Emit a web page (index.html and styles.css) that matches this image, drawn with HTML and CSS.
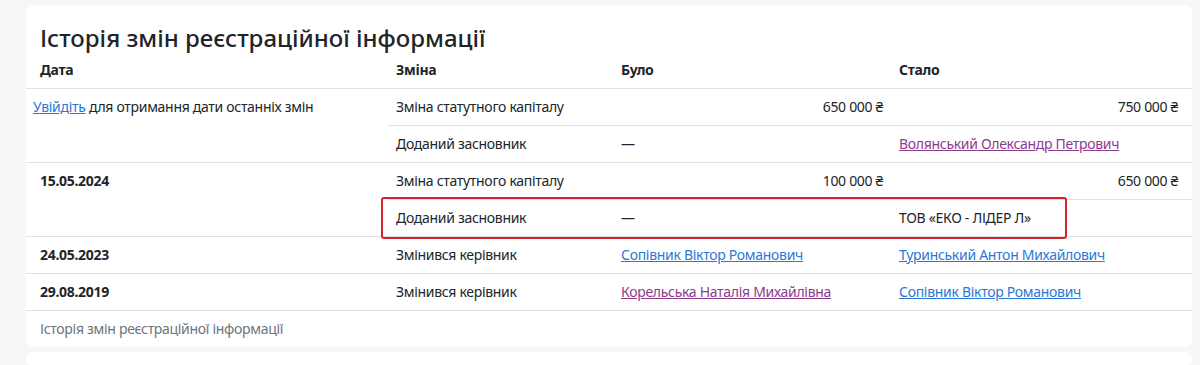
FILE: index.html
```html
<!DOCTYPE html>
<html lang="uk">
<head>
<meta charset="utf-8">
<title>Історія змін реєстраційної інформації</title>
<link rel="stylesheet" href="styles.css">
</head>
<body>
<main class="page">
  <section class="card">
    <h2 class="card-title">Історія змін реєстраційної інформації</h2>
    <div class="table-wrap">
      <table class="history">
        <caption>Історія змін реєстраційної інформації</caption>
        <colgroup>
          <col class="c-date"><col class="c-change"><col class="c-was"><col class="c-now">
        </colgroup>
        <thead>
          <tr><th class="date">Дата</th><th>Зміна</th><th>Було</th><th class="last">Стало</th></tr>
        </thead>
        <tbody>
          <tr>
            <td rowspan="2" class="login"><a href="#" class="link">Увійдіть</a> для отримання дати останніх змін</td>
            <td>Зміна статутного капіталу</td>
            <td class="num">650 000 ₴</td>
            <td class="num last">750 000 ₴</td>
          </tr>
          <tr>
            <td>Доданий засновник</td>
            <td>—</td>
            <td class="last"><a href="#" class="link visited">Волянський Олександр Петрович</a></td>
          </tr>
          <tr>
            <td rowspan="2" class="date">15.05.2024</td>
            <td>Зміна статутного капіталу</td>
            <td class="num">100 000 ₴</td>
            <td class="num last">650 000 ₴</td>
          </tr>
          <tr class="marked">
            <td>Доданий засновник</td>
            <td>—</td>
            <td class="last">ТОВ «ЕКО - ЛІДЕР Л»</td>
          </tr>
          <tr>
            <td class="date">24.05.2023</td>
            <td>Змінився керівник</td>
            <td><a href="#" class="link">Сопівник Віктор Романович</a></td>
            <td class="last"><a href="#" class="link">Туринський Антон Михайлович</a></td>
          </tr>
          <tr>
            <td class="date">29.08.2019</td>
            <td>Змінився керівник</td>
            <td><a href="#" class="link visited">Корельська Наталія Михайлівна</a></td>
            <td class="last"><a href="#" class="link">Сопівник Віктор Романович</a></td>
          </tr>
        </tbody>
      </table>
      <div class="highlight" aria-hidden="true"></div>
    </div>
  </section>
  <section class="card next"></section>
</main>
</body>
</html>
```
FILE: styles.css
```css
* { box-sizing: border-box; }
html, body { margin: 0; padding: 0; }
body {
  background: #f6f7f9;
  font-family: "Noto Sans", "Open Sans", sans-serif;
  color: #212529;
  font-size: 14px;
  line-height: 20px;
  letter-spacing: -0.3px;
  overflow: hidden;
}
.page {
  padding: 6px 8px 0 26px;
  display: flex;
  flex-direction: column;
  gap: 6px;
}
.card {
  background: #fff;
  border-radius: 6px;
  padding-top: 17px;
}
.card.next { height: 13px; padding: 0; }
.card-title {
  margin: 0 0 0 14px;
  font-size: 24px;
  line-height: 29px;
  font-weight: 500;
  letter-spacing: 0;
}
.table-wrap { position: relative; }
.history {
  width: 100%;
  border-collapse: collapse;
  caption-side: bottom;
  table-layout: fixed;
}
.c-date { width: 362px; }
.c-change { width: 225px; }
.c-was { width: 278px; }
.history caption {
  text-align: left;
  color: #6c757d;
  padding: 8px 14px 7px 14px;
}
.history th, .history td {
  padding: 8px;
  text-align: left;
  vertical-align: top;
  border-bottom: 1px solid #dee2e6;
  white-space: nowrap;
}
.history th { font-weight: 700; }
.history .date { padding-left: 14px; font-weight: 700; }
.history .login { padding-left: 7px; }
.history .last { padding-right: 14px; }
.history .num { text-align: right; }
.link { color: #2b78d6; text-decoration: underline; }
.link.visited { color: #8e3a8d; }
.highlight {
  position: absolute;
  left: 355px;
  top: 145px;
  width: 686px;
  height: 42px;
  border: 2.5px solid #d3222a;
  border-radius: 3px;
  pointer-events: none;
}
```
